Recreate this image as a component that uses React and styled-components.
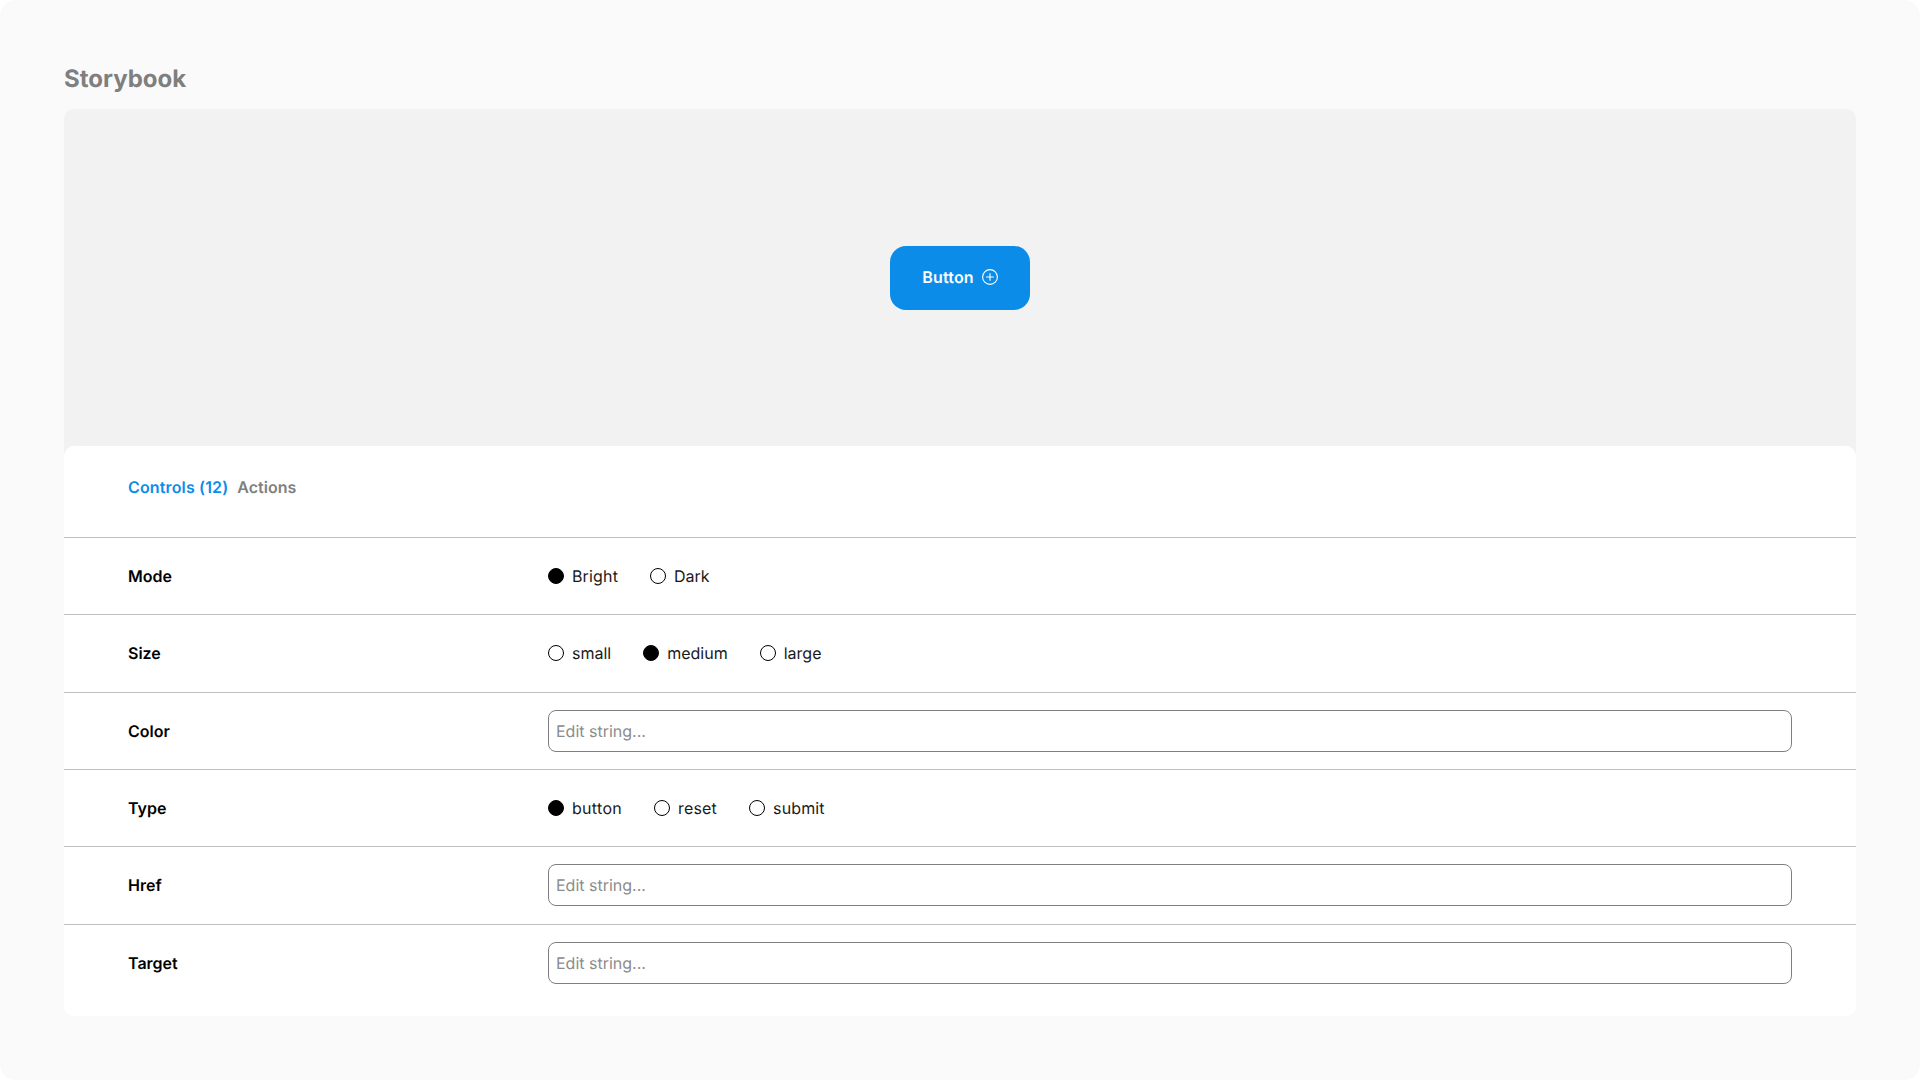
import styled, { createGlobalStyle } from 'styled-components';

const GlobalStyle = createGlobalStyle`
  html, body {
    margin: 0;
    padding: 0;
    background: #fff;
    font-family: Inter, "Liberation Sans", sans-serif;
    text-rendering: geometricPrecision;
  }
`

const Page = styled.div`
  box-sizing: border-box;
  width: 1920px;
  height: 1080px;
  padding: 62px 64px 0;
  background: #fafafa;
  border-radius: 16px;
`

const Title = styled.h1`
  margin: 0;
  height: 47px;
  font-size: 24px;
  line-height: 34px;
  font-weight: 700;
  color: #7f7f7f;
`

const Preview = styled.div`
  display: flex;
  align-items: center;
  justify-content: center;
  box-sizing: border-box;
  height: 349px;
  padding-bottom: 12px;
  margin-bottom: -12px;
  background: #f2f2f2;
  border-radius: 10px 10px 0 0;
`

const DemoButton = styled.button`
  display: flex;
  align-items: center;
  justify-content: center;
  gap: 8px;
  width: 140px;
  height: 64px;
  padding: 0 0 1px;
  border: 0;
  border-radius: 16px;
  background: #0b8ce9;
  color: #fff;
  font-family: inherit;
  font-size: 16px;
  font-weight: 600;
  letter-spacing: 0.2px;
  text-rendering: inherit;
`

const Panel = styled.div`
  position: relative;
  height: 570px;
  background: #fff;
  border-radius: 10px;
`

const Tabs = styled.div`
  display: flex;
  gap: 9px;
  height: 92px;
  padding: 31px 64px 0;
  box-sizing: border-box;
  border-bottom: 1px solid #bfbfbf;
`

const Tab = styled.span`
  font-size: 16px;
  line-height: 20px;
  font-weight: 600;
  letter-spacing: ${p => (p.$active ? '0.15px' : '0')};
  color: ${p => (p.$active ? '#0b8ce9' : '#7f7f7f')};
`

const Row = styled.div`
  display: flex;
  align-items: center;
  box-sizing: border-box;
  height: 77.33px;
  padding: 0 64px;
  border-bottom: ${p => (p.$last ? '0' : '1px solid #bfbfbf')};
`

const Label = styled.div`
  width: 420px;
  flex-shrink: 0;
  font-size: 16px;
  font-weight: 600;
  color: #000;
`

const Options = styled.div`
  display: flex;
  gap: 32px;
`

const Option = styled.label`
  display: flex;
  align-items: center;
  gap: 8px;
  font-size: 16px;
  line-height: 20px;
  color: #1a1a1a;
`

// the reference's t is a little wider than the installed Inter's
const OptionText = styled.span`
  letter-spacing: ${p => p.$track}px;
`

const Dot = styled.span`
  box-sizing: border-box;
  width: 16px;
  height: 16px;
  border-radius: 50%;
  border: 1px solid #000;
  background: ${p => (p.$on ? '#000' : '#fff')};
`

const TextField = styled.input`
  box-sizing: border-box;
  flex: 1;
  height: 42px;
  padding: 0 7px;
  border: 1px solid #7f7f7f;
  border-radius: 8px;
  outline: none;
  font-family: inherit;
  font-size: 16px;
  text-rendering: inherit;
  &::placeholder {
    color: #8c8c8c;
    opacity: 1;
  }
`

const PlusIcon = () => (
  <svg width="16" height="16" viewBox="0 0 16 16" fill="none" stroke="#fff" strokeWidth="1.1">
    <circle cx="8" cy="8" r="7.4" />
    <path d="M8 4.2v7.6M4.2 8h7.6" />
  </svg>
)

const trackFor = word => {
  const extra = (word.split('t').length - 1) * 0.9
  return extra ? (extra / word.length).toFixed(2) : 0
}

const RadioGroup = ({ items, selected }) => (
  <Options>
    {items.map(item => (
      <Option key={item}>
        <Dot $on={item === selected} />
        <OptionText $track={trackFor(item)}>{item}</OptionText>
      </Option>
    ))}
  </Options>
)

const App = () => {
  return (
    <Page>
      <GlobalStyle />
      <Title>Storybook</Title>
      <Preview>
        <DemoButton>Button <PlusIcon /></DemoButton>
      </Preview>
      <Panel>
        <Tabs>
          <Tab $active>Controls (12)</Tab>
          <Tab>Actions</Tab>
        </Tabs>
        <Row>
          <Label>Mode</Label>
          <RadioGroup items={['Bright', 'Dark']} selected="Bright" />
        </Row>
        <Row>
          <Label>Size</Label>
          <RadioGroup items={['small', 'medium', 'large']} selected="medium" />
        </Row>
        <Row>
          <Label>Color</Label>
          <TextField placeholder="Edit string..." />
        </Row>
        <Row>
          <Label>Type</Label>
          <RadioGroup items={['button', 'reset', 'submit']} selected="button" />
        </Row>
        <Row>
          <Label>Href</Label>
          <TextField placeholder="Edit string..." />
        </Row>
        <Row $last>
          <Label>Target</Label>
          <TextField placeholder="Edit string..." />
        </Row>
      </Panel>
    </Page>
  )
}

export default App
